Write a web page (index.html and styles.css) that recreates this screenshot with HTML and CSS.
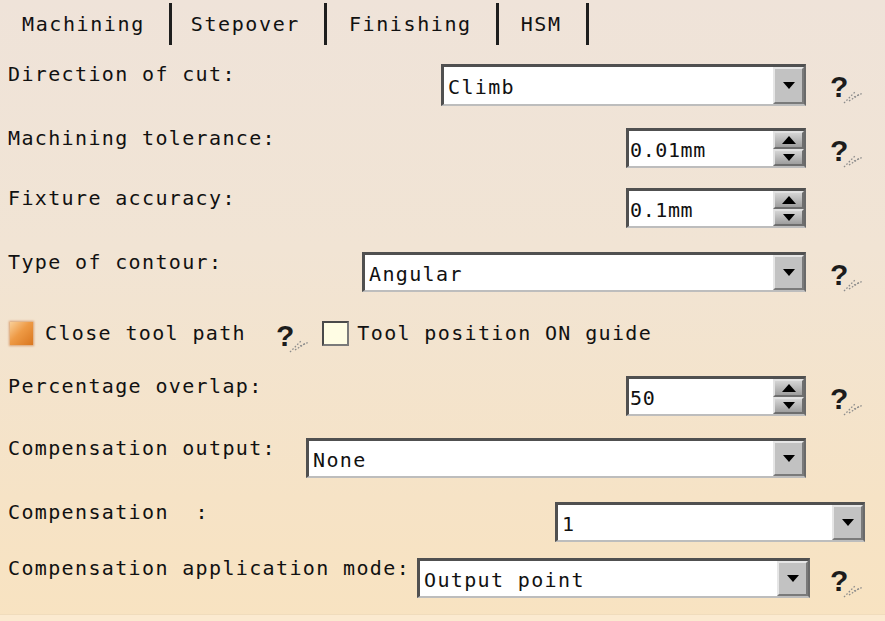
FILE: index.html
```html
<!DOCTYPE html>
<html>
<head>
<meta charset="utf-8">
<title>Machining</title>
<link rel="stylesheet" href="styles.css">
</head>
<body>
<div class="dialog">
  <div class="tabs">
    <div class="tab">Machining</div>
    <div class="tab tab-narrow">Stepover</div>
    <div class="tab">Finishing</div>
    <div class="tab">HSM</div>
  </div>
  <div class="form">
    <div class="row">
      <span class="label">Direction of cut:</span>
      <div class="combo tall w-dir"><span class="value">Climb</span><span class="drop"><i class="tri-down"></i></span></div>
      <span class="help-slot"><span class="help"><span class="q">?</span><svg class="trail" width="22" height="20" viewBox="0 0 22 20"><path d="M2 19 L13 8" /><path d="M7 17 L18 10" /><path d="M12 13 L21 9" /></svg></span></span>
    </div>
    <div class="row">
      <span class="label">Machining tolerance:</span>
      <div class="spin"><span class="value">0.01mm</span><span class="spin-btn"><span class="half"><i class="tri-up"></i></span><span class="half"><i class="tri-down"></i></span></span></div>
      <span class="help-slot"><span class="help"><span class="q">?</span><svg class="trail" width="22" height="20" viewBox="0 0 22 20"><path d="M2 19 L13 8" /><path d="M7 17 L18 10" /><path d="M12 13 L21 9" /></svg></span></span>
    </div>
    <div class="row">
      <span class="label">Fixture accuracy:</span>
      <div class="spin"><span class="value">0.1mm</span><span class="spin-btn"><span class="half"><i class="tri-up"></i></span><span class="half"><i class="tri-down"></i></span></span></div>
      <span class="help-slot"></span>
    </div>
    <div class="row">
      <span class="label">Type of contour:</span>
      <div class="combo w-contour"><span class="value">Angular</span><span class="drop"><i class="tri-down"></i></span></div>
      <span class="help-slot"><span class="help"><span class="q">?</span><svg class="trail" width="22" height="20" viewBox="0 0 22 20"><path d="M2 19 L13 8" /><path d="M7 17 L18 10" /><path d="M12 13 L21 9" /></svg></span></span>
    </div>
    <div class="row row-check">
      <span class="check checked"></span>
      <span class="check-label">Close tool path</span>
      <span class="help help-inline"><span class="q">?</span><svg class="trail" width="22" height="20" viewBox="0 0 22 20"><path d="M2 19 L13 8" /><path d="M7 17 L18 10" /><path d="M12 13 L21 9" /></svg></span>
      <span class="check empty"></span>
      <span class="check-label">Tool position ON guide</span>
    </div>
    <div class="row">
      <span class="label">Percentage overlap:</span>
      <div class="spin"><span class="value">50</span><span class="spin-btn"><span class="half"><i class="tri-up"></i></span><span class="half"><i class="tri-down"></i></span></span></div>
      <span class="help-slot"><span class="help"><span class="q">?</span><svg class="trail" width="22" height="20" viewBox="0 0 22 20"><path d="M2 19 L13 8" /><path d="M7 17 L18 10" /><path d="M12 13 L21 9" /></svg></span></span>
    </div>
    <div class="row">
      <span class="label">Compensation output:</span>
      <div class="combo w-output"><span class="value">None</span><span class="drop"><i class="tri-down"></i></span></div>
      <span class="help-slot"></span>
    </div>
    <div class="row">
      <span class="label">Compensation  :</span>
      <div class="combo w-comp"><span class="value">1</span><span class="drop"><i class="tri-down"></i></span></div>
    </div>
    <div class="row">
      <span class="label">Compensation application mode:</span>
      <div class="combo w-mode"><span class="value">Output point</span><span class="drop"><i class="tri-down"></i></span></div>
      <span class="help-slot narrow"><span class="help"><span class="q">?</span><svg class="trail" width="22" height="20" viewBox="0 0 22 20"><path d="M2 19 L13 8" /><path d="M7 17 L18 10" /><path d="M12 13 L21 9" /></svg></span></span>
    </div>
  </div>
  <div class="footer"></div>
</div>
</body>
</html>
```

FILE: styles.css
```css
* { box-sizing: border-box; }
html, body { margin: 0; padding: 0; }
body {
  width: 885px;
  height: 621px;
  overflow: hidden;
  font-family: "DejaVu Sans Mono", "Liberation Mono", monospace;
  font-size: 20px;
  color: #111;
}
.dialog {
  width: 885px;
  height: 621px;
  display: flex;
  flex-direction: column;
  background: linear-gradient(180deg, #efe3d9 0%, #f1e4d4 40%, #f6e3c6 80%, #f8e3c1 100%);
}

/* tabs */
.tabs {
  display: flex;
  height: 48px;
  flex: none;
}
.tab {
  height: 42px;
  margin-top: 3px;
  line-height: 42px;
  padding: 0 24px 0 22px;
  letter-spacing: 1.6px;
  border-right: 3px solid #1e1e1e;
  white-space: nowrap;
}
.tab-narrow { padding-left: 19px; }

/* form */
.form {
  flex: 1;
  padding-top: 14px;
  display: grid;
  grid-template-rows: 64px 60px 64px 62px 62px 62px 64px 56px 58px;
}
.row {
  display: flex;
  align-items: flex-start;
  padding-left: 8px;
}
.label {
  line-height: 24px;
  letter-spacing: 1.36px;
  white-space: pre;
}
.combo, .spin {
  margin-left: auto;
  margin-top: 2px;
  height: 40px;
  display: flex;
  align-items: stretch;
  background: #fff;
  border-top: 3px solid #505050;
  border-left: 3px solid #505050;
  border-right: 2px solid #6a6a6a;
  border-bottom: 2px solid #bdbdbd;
  flex: none;
}
.combo.tall { height: 42px; }
.w-dir { width: 365px; }
.w-contour { width: 444px; }
.w-output { width: 500px; }
.w-comp { width: 310px; margin-right: 20px; }
.w-mode { width: 393px; }
.spin { width: 180px; }

.value {
  flex: 1;
  display: flex;
  align-items: center;
  padding-left: 4px;
  padding-top: 2px;
  letter-spacing: 1.36px;
  white-space: pre;
  overflow: hidden;
}
.spin .value {
  padding-left: 1px;
  letter-spacing: 0.6px;
}
.drop {
  width: 31px;
  flex: none;
  display: flex;
  align-items: center;
  justify-content: center;
  background: #c2c2c2;
  border-top: 2px solid #e6e6e6;
  border-left: 2px solid #e6e6e6;
  border-right: 2px solid #7a7a7a;
  border-bottom: 2px solid #7a7a7a;
}
.tri-down {
  display: block;
  width: 0;
  height: 0;
  border-left: 6px solid transparent;
  border-right: 6px solid transparent;
  border-top: 7px solid #000;
}
.tri-up {
  display: block;
  width: 0;
  height: 0;
  border-left: 7px solid transparent;
  border-right: 7px solid transparent;
  border-bottom: 8px solid #000;
}
.spin-btn {
  width: 31px;
  flex: none;
  display: flex;
  flex-direction: column;
  background: #b8b8b8;
}
.half {
  flex: 1;
  display: flex;
  align-items: center;
  justify-content: center;
  border-top: 2px solid #e2e2e2;
  border-left: 2px solid #e2e2e2;
  border-right: 2px solid #6e6e6e;
  border-bottom: 2px solid #6e6e6e;
  background: linear-gradient(180deg, #d4d4d4, #9e9e9e);
}

/* help */
.help-slot {
  width: 79px;
  flex: none;
  height: 44px;
  padding-left: 24px;
  padding-top: 6px;
  display: flex;
  align-items: center;
}
.help-slot.narrow { width: 75px; padding-left: 20px; }
.help {
  display: inline-flex;
  align-items: flex-end;
}
.q {
  font-family: "Liberation Sans", Arial, sans-serif;
  font-weight: bold;
  font-size: 30px;
  line-height: 26px;
  color: #1c1c1c;
}
.trail {
  margin-left: -6px;
  margin-bottom: -4px;
}
.trail path {
  fill: none;
  stroke: #8c8c8c;
  stroke-width: 1.3;
  stroke-dasharray: 1.6 1.8;
}

/* checkbox row */
.row-check {
  align-items: center;
  height: 42px;
}
.check {
  flex: none;
  display: block;
}
.check.checked {
  width: 23px;
  height: 23px;
  margin-left: 2px;
  margin-right: 12px;
  background: linear-gradient(135deg, #f9cf98 0%, #ee9a45 45%, #d9761f 100%);
  box-shadow: 0 0 2px 1px #d9a070;
}
.check.empty {
  width: 27px;
  height: 25px;
  margin-left: 12px;
  margin-right: 8px;
  background: #fffde4;
  border-top: 2px solid #4a4a4a;
  border-left: 2px solid #4a4a4a;
  border-right: 2px solid #7a7a7a;
  border-bottom: 2px solid #7a7a7a;
}
.check-label {
  letter-spacing: 1.36px;
  white-space: pre;
  line-height: 24px;
}
.help-inline {
  margin-left: 30px;
  margin-top: 6px;
}

.footer {
  flex: none;
  height: 7px;
  background: #fbead0;
  border-top: 1px solid #f0dcbc;
}
```
